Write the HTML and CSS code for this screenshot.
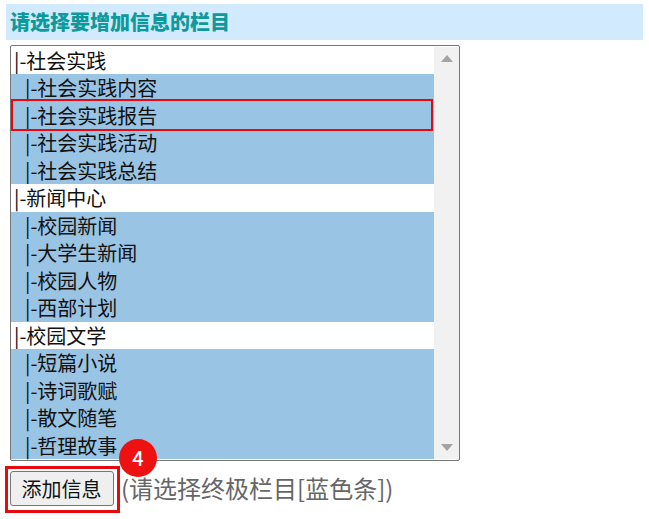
FILE: index.html
```html
<!DOCTYPE html>
<html lang="zh-CN">
<head>
    <meta charset="UTF-8">
    <meta name="viewport" content="width=device-width, initial-scale=1.0">
    <title>添加信息</title>
    <link rel="stylesheet" href="styles.css">
</head>
<body>

    <h2 class="title">请选择要增加信息的栏目</h2>

    <div class="listbox">
        <ul class="options">
            <li class="opt top">|-社会实践</li>
            <li class="opt leaf">|-社会实践内容</li>
            <li class="opt leaf picked">|-社会实践报告</li>
            <li class="opt leaf">|-社会实践活动</li>
            <li class="opt leaf">|-社会实践总结</li>
            <li class="opt top">|-新闻中心</li>
            <li class="opt leaf">|-校园新闻</li>
            <li class="opt leaf">|-大学生新闻</li>
            <li class="opt leaf">|-校园人物</li>
            <li class="opt leaf">|-西部计划</li>
            <li class="opt top">|-校园文学</li>
            <li class="opt leaf">|-短篇小说</li>
            <li class="opt leaf">|-诗词歌赋</li>
            <li class="opt leaf">|-散文随笔</li>
            <li class="opt leaf">|-哲理故事</li>
        </ul>
        <div class="scrollbar">
            <svg width="12" height="7" viewBox="0 0 12 7"><path d="M6 0 L12 7 L0 7 Z" fill="#a3a3a3"/></svg>
            <svg width="12" height="7" viewBox="0 0 12 7"><path d="M0 0 L12 0 L6 7 Z" fill="#a3a3a3"/></svg>
        </div>
    </div>

    <div class="actions">
        <div class="btn-mark">
            <button class="add-btn" type="button">添加信息</button>
            <span class="badge">4</span>
        </div>
        <span class="hint">(请选择终极栏目[蓝色条])</span>
    </div>

</body>
</html>
```

FILE: styles.css
```css
body {
    margin: 0;
    padding: 4px 6px 0;
    background-color: #fff;
    color: #111;
    font-family: "Noto Sans CJK SC", "Liberation Sans", sans-serif;
}
.title {
    margin: 0;
    height: 36px;
    padding-left: 4px;
    background-color: #d2eafd;
    color: #0e9a9c;
    font-size: 20px;
    font-weight: 900;
    line-height: 36px;
}
.listbox {
    display: flex;
    box-sizing: border-box;
    width: 450px;
    height: 416px;
    margin: 5px 0 0 4px;
    padding: 1px 0;
    border: 1px solid #767676;
    border-radius: 2px;
}
.options {
    display: grid;
    flex: 1;
    grid-template-rows: repeat(15, 1fr);
    margin: 0;
    padding: 0;
    list-style: none;
}
.opt {
    font-size: 20px;
    line-height: 27px;
    white-space: nowrap;
}
.top {
    padding-left: 3px;
    background-color: #fff;
}
.leaf {
    padding-left: 14px;
    background-color: #99c4e4;
}
.picked {
    position: relative;
    z-index: 1;
}
.picked::after {
    content: "";
    position: absolute;
    top: -3px;
    right: 1px;
    bottom: -2px;
    left: 0;
    border: 2px solid #e8090f;
}
.scrollbar {
    display: flex;
    flex-direction: column;
    align-items: center;
    justify-content: space-between;
    box-sizing: border-box;
    width: 25px;
    padding: 8px 0;
    background-color: #f1f1f1;
}
.actions {
    display: flex;
    align-items: center;
    margin-top: 5px;
}
.btn-mark {
    position: relative;
    box-sizing: border-box;
    width: 115px;
    height: 47px;
    margin-left: -1px;
    padding: 2px;
    border: 3px solid #e8090f;
}
.add-btn {
    display: block;
    width: 104px;
    height: 35px;
    padding: 0 1px 0 0;
    background-color: #efefef;
    border: 1px solid #767676;
    border-radius: 3px;
    color: #111;
    font-family: inherit;
    font-size: 20px;
}
.badge {
    position: absolute;
    top: -30px;
    left: 111px;
    width: 38px;
    height: 38px;
    border-radius: 50%;
    background-color: #ee1111;
    color: #fff;
    font-size: 20px;
    font-weight: 500;
    line-height: 38px;
    text-align: center;
}
.hint {
    margin-left: 1px;
    padding-bottom: 5px;
    color: #666;
    font-size: 24px;
    white-space: nowrap;
}
```
